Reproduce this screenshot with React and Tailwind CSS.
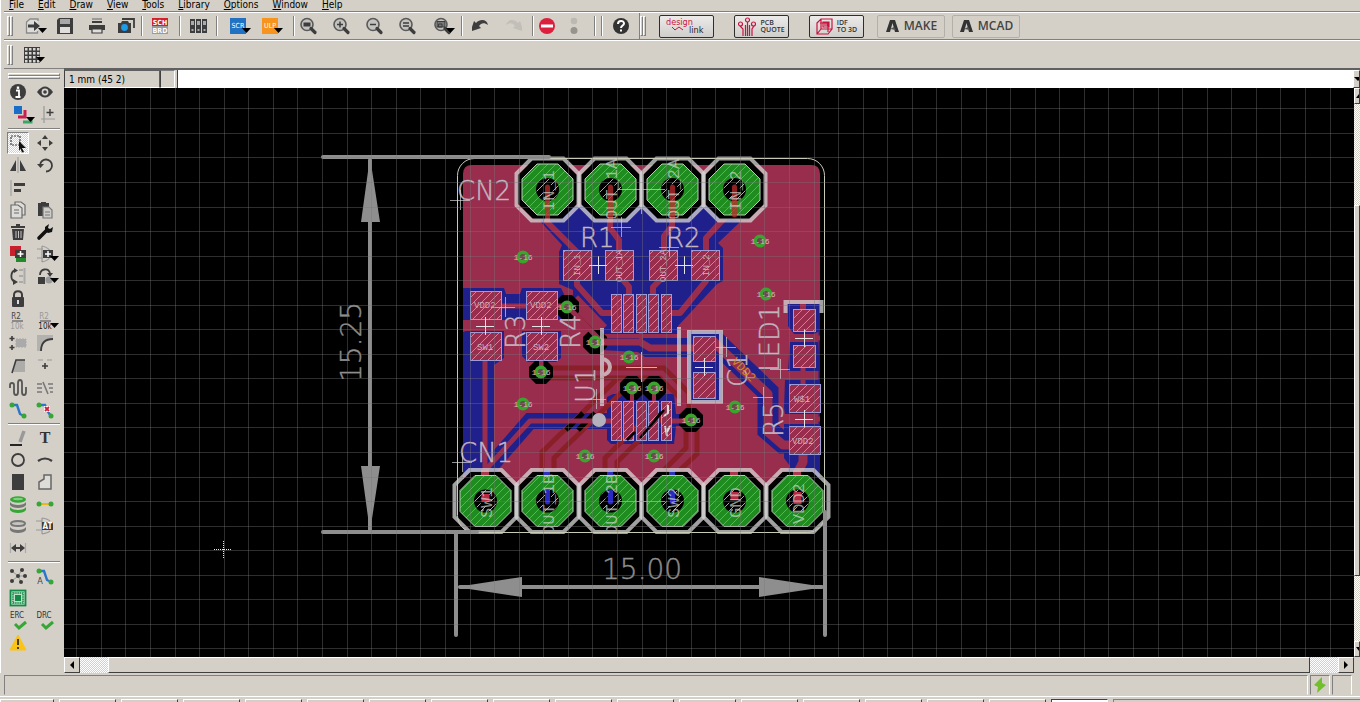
import React from "react";

/* ---------- icons ---------- */

const D = "#3d3d3d";
const G = "#9a9a9a";

const magnifier = (inner) => (
  <>
    <circle cx="9" cy="8.500" r="6" fill="#c4c2be" stroke="#5a5a5a" strokeWidth="1.600" />
    <path d="M13 12.500l4 4" stroke={D} strokeWidth="3.200" strokeLinecap="round" />
    {inner}
  </>
);

const ICONS = {
  file: (
    <>
      <path d="M14 5V3H6L2.500 6v11h11v-2" fill="#dedcd8" stroke="#8a8a8a" strokeWidth="1.300" />
      <path d="M4 8.500h6V5l6 5-6 5v-3.500H4z" fill={D} />
    </>
  ),
  save: (
    <>
      <path d="M2 4l2-2h14v16H2z" fill={D} />
      <rect x="5" y="3" width="10" height="5" fill="#a8a8a8" />
      <rect x="5" y="11" width="10" height="6" fill="#e0deda" />
    </>
  ),
  print: (
    <>
      <rect x="5" y="2" width="10" height="2" fill={G} />
      <rect x="5" y="5" width="10" height="2" fill={D} />
      <path d="M2 9h16v5H2z" fill={D} />
      <path d="M5 13h10v4H5z" fill="#e0deda" stroke={D} strokeWidth="1.200" />
    </>
  ),
  camera: (
    <>
      <path d="M6 3h12v9" fill="none" stroke={D} strokeWidth="1.800" />
      <path d="M2 7h3l1-2h6l1 2h2v10H2z" fill={D} />
      <circle cx="8.500" cy="11.500" r="3.400" fill="#1c9be8" />
    </>
  ),
  lib: (
    <>
      {[2, 8, 14].map((x) => (
        <g key={x}>
          <rect x={x} y="3" width="5" height="14" fill={D} />
          <rect x={x + 1} y="5" width="3" height="4" fill="#aaa" />
          <rect x={x + 1.5} y="13" width="2" height="2" fill="#aaa" />
        </g>
      ))}
    </>
  ),
  zfit: magnifier(<rect x="5.500" y="6.500" width="7" height="4" fill={D} />),
  zin: magnifier(<path d="M6 8.500h6M9 5.500v6" stroke={D} strokeWidth="1.500" />),
  zout: magnifier(<path d="M6 8.500h6" stroke={D} strokeWidth="1.500" />),
  zredraw: magnifier(<path d="M6 7h6M6 10h6" stroke={D} strokeWidth="1.400" />),
  zsel: magnifier(<path d="M5 5.500h8v5.500H5z M6.500 8h3.500v3H6.500z" fill="#777" stroke={D} />),
  undo: <path d="M2 11l2-6 2 2c5-5 11-3 12 2-4-3-7-2-9 1l2 2-9 3z" fill={D} />,
  redo: <path d="M18 11l-2-6-2 2C9 2 3 4 2 9c4-3 7-2 9 1l-2 2 9 3z" fill="#c2bfb8" />,
  stop: (
    <>
      <circle cx="10" cy="10" r="8" fill="#dc1f3c" />
      <rect x="4" y="8.500" width="12" height="3" fill="#fff" />
    </>
  ),
  dots: (
    <>
      <circle cx="10" cy="5" r="3.300" fill="#bcb9b3" />
      <circle cx="10" cy="14.500" r="3.500" fill="#96948f" />
    </>
  ),
  help: (
    <>
      <circle cx="10" cy="10" r="8" fill="#333" />
      <path d="M7 8c0-4 6-4 6-.5 0 2-3 2-3 4.500" fill="none" stroke="#fff" strokeWidth="2" />
      <rect x="9" y="13.500" width="2" height="2" fill="#fff" />
    </>
  ),
  grid: (
    <>
      <rect x="2" y="2" width="16" height="16" fill={D} />
      {[3, 7, 11, 15].map((x) =>
        [3, 7, 11, 15].map((y) => <rect key={x + "-" + y} x={x} y={y} width="2.500" height="2.500" fill="#d8d6d2" />)
      )}
    </>
  ),
  info: (
    <>
      <circle cx="10" cy="10" r="8" fill={D} />
      <path d="M8 8.500h3V15M7.500 15h5" stroke="#fff" strokeWidth="1.800" fill="none" />
      <rect x="8.800" y="4.500" width="2.400" height="2.400" fill="#fff" />
    </>
  ),
  eye: (
    <>
      <path d="M2 10q8-11 16 0q-8 11-16 0z" fill={D} />
      <circle cx="10" cy="10" r="3.400" fill="#d8d6d2" />
      <circle cx="10" cy="10" r="1.800" fill={D} />
    </>
  ),
  layers: (
    <>
      <path d="M11 17h8v-4" fill="none" stroke="#3aa566" strokeWidth="3" />
      <path d="M6 12h7V5" fill="none" stroke="#c81e52" strokeWidth="3" />
      <rect x="2" y="1" width="8" height="8" fill="#1b6ec8" />
    </>
  ),
  mark: (
    <>
      <path d="M9 1v17M6 14h14" stroke="#999" strokeWidth="1.200" />
      <path d="M15 4v7M11.500 7.500h7" stroke={D} strokeWidth="1.400" />
    </>
  ),
  select: (
    <>
      <rect x="3" y="3" width="9" height="9" fill="none" stroke={D} strokeWidth="1.200" strokeDasharray="2 1" />
      <path d="M11 8l7 7h-4l2 4-2 .5-1.500-4L11 18z" fill="#111" />
    </>
  ),
  move: <path d="M10 2l3 4H7zM10 18l3-4H7zM2 10l4-3v6zM18 10l-4-3v6z" fill={D} />,
  mirror: (
    <>
      <path d="M10 2v16" stroke="#aaa" strokeWidth="1.500" />
      <path d="M8 5v11H2zM12 5v11h6z" fill={D} />
    </>
  ),
  rotate: (
    <>
      <path d="M5 10a6 6 0 1 1 6 6.500" fill="none" stroke={D} strokeWidth="1.800" />
      <path d="M2 9h7l-3.500 4z" fill={D} />
    </>
  ),
  align: (
    <>
      <path d="M3 2v16" stroke="#aaa" strokeWidth="1.500" />
      <rect x="6" y="5" width="11" height="3" fill={D} />
      <rect x="6" y="11" width="7" height="3" fill={D} />
    </>
  ),
  copy: (
    <g fill="#dedcd8" stroke="#6a6a6a" strokeWidth="1.200">
      <path d="M7 2h6l4 3v10H7z" />
      <path d="M3 5h7l4 3v10H3z" />
      <path d="M6 10h5M6 13h5" />
    </g>
  ),
  paste: (
    <>
      <path d="M3 3h3V2h5v1h3v13H3z" fill={D} />
      <path d="M8 7h6l3 3v8H8z" fill="#cfcdc9" stroke="#777" strokeWidth="1.200" />
      <path d="M10 12h5M10 15h5" stroke="#777" />
    </>
  ),
  trash: (
    <>
      <path d="M3 4h14v2H3zM8 2h4v2H8zM4 7h12l-1 11H5z" fill={D} />
      <path d="M8 9v7M10.500 9v7M13 9v7" stroke="#c8c6c2" />
    </>
  ),
  wrench: (
    <>
      <path d="M4 16l8-8" stroke="#111" strokeWidth="3.600" strokeLinecap="round" />
      <path d="M10 9V5l4-3-1 4 2 1 3-2-1 5-4 1z" fill="#111" />
    </>
  ),
  add: (
    <>
      <rect x="2" y="2" width="11" height="10" fill="#c9202c" />
      <rect x="8" y="9" width="10" height="9" fill="#238a2c" />
      <rect x="7" y="6" width="11" height="8" fill={D} />
      <path d="M9.500 10h6M12.500 7v6" stroke="#fff" strokeWidth="1.500" />
    </>
  ),
  addgate: (
    <>
      <path d="M1 5h6M1 14h6M6 2v16M6 2q8 2 9 7M6 18q8-2 9-7" fill="none" stroke={G} strokeWidth="1.200" />
      <rect x="7" y="6" width="10" height="8" fill={D} />
      <path d="M9 10h6M12 7v6" stroke="#fff" strokeWidth="1.500" />
    </>
  ),
  pinswap: (
    <>
      <path d="M8 4C2 5 2 14 7 16" fill="none" stroke={D} strokeWidth="1.800" />
      <path d="M6 2l4 2.500L6 7zM5 13l5 3-5 3z" fill={D} />
      <path d="M11 4h4M11 10h4M11 16h4M16.500 2v16" stroke="#aaa" strokeWidth="2" />
    </>
  ),
  replace: (
    <>
      <path d="M4 9c0-6 8-8 10-2" fill="none" stroke={D} strokeWidth="1.800" />
      <path d="M11 7h6l-3 4z" fill={D} />
      <rect x="2" y="11" width="7" height="7" fill={D} />
      <circle cx="13" cy="14" r="3.500" fill="#999" />
    </>
  ),
  lock: (
    <>
      <path d="M6 9V6c0-5 8-5 8 0v3" fill="none" stroke={D} strokeWidth="2" />
      <rect x="4" y="8" width="12" height="10" rx="1" fill={D} />
      <path d="M10 11v4" stroke="#ddd" strokeWidth="2" />
    </>
  ),
  smash: (
    <>
      <path d="M4 3v5M1.500 5.500h5M4 12v5M1.500 14.500h5" stroke={D} strokeWidth="1.600" />
      <path d="M8 6h10v8H8z" fill="#aaa" stroke="#aaa" strokeDasharray="2 1" />
    </>
  ),
  miter: (
    <>
      <rect x="2" y="2" width="16" height="16" fill="#b4b2ae" />
      <path d="M6 18Q7 6 18 6v12z" fill="#d4d0c8" />
      <path d="M6 18Q6 6 18 6" fill="none" stroke={D} strokeWidth="1.800" />
    </>
  ),
  split: (
    <>
      <path d="M5 17L8 5h9v12z" fill="#aeaca8" />
      <path d="M4 18L8 5h9" fill="none" stroke={D} strokeWidth="1.600" />
    </>
  ),
  optimize: (
    <>
      <path d="M3 5h5M12 5h5" stroke={G} strokeWidth="1.200" />
      <path d="M10 8v6M7 11h6" stroke={D} strokeWidth="1.600" />
    </>
  ),
  meander: (
    <path d="M2 10V7q0-2 2-2t2 2v7q0 3 2 3t2-3V5q0-3 2-3t2 3v9q0 3 2 3t2-3V9" fill="none" stroke="#555" strokeWidth="1.800" />
  ),
  ripup: (
    <path d="M2 6h5M2 10h5M2 14h5M13 6h5M14 10h4M15 14h3M8 4l5 12" fill="none" stroke="#777" strokeWidth="1.600" />
  ),
  route: (
    <>
      <path d="M4 5h5l3 9 4 2" fill="none" stroke="#2a77c9" strokeWidth="2.400" />
      <circle cx="4" cy="5" r="2.500" fill="#37a637" />
      <circle cx="16" cy="16" r="2.500" fill="#37a637" />
    </>
  ),
  unroute: (
    <>
      <path d="M4 5h6l3 7 3 4" fill="none" stroke="#2a77c9" strokeWidth="2.400" />
      <circle cx="4" cy="5" r="2.500" fill="#37a637" />
      <circle cx="16" cy="16" r="2.500" fill="#37a637" />
      <path d="M9 6h6v6H9z" fill="#fff" />
      <path d="M10 7l4 4M14 7l-4 4" stroke="#d01f3c" strokeWidth="1.800" />
    </>
  ),
  wire: (
    <>
      <path d="M2 17h12" stroke="#111" strokeWidth="1.800" />
      <path d="M12 14l4-11" stroke="#999" strokeWidth="3.500" />
    </>
  ),
  circle: <circle cx="10" cy="10" r="6" fill="none" stroke={D} strokeWidth="1.800" />,
  arc: <path d="M3 11q7-5 14 0" fill="none" stroke={D} strokeWidth="2.200" />,
  rect: <rect x="4" y="2" width="12" height="16" fill={D} />,
  polygon: <path d="M4 17V10l5-3V3h7v14z" fill="#dedcd8" stroke="#666" strokeWidth="1.500" />,
  via: (
    <>
      <path d="M2 13c2 4 14 4 16 0v3c-2 4-14 4-16 0z" fill="#37a637" />
      <path d="M2 8c2 4 14 4 16 0v3c-2 4-14 4-16 0z" fill="#777" />
      <ellipse cx="10" cy="5.500" rx="8" ry="3.300" fill="#37a637" />
      <ellipse cx="10" cy="5" rx="5" ry="1.200" fill="#7fd07f" />
    </>
  ),
  signal: (
    <>
      <path d="M4 10h12" stroke="#e8b71c" strokeWidth="2" />
      <circle cx="4" cy="10" r="2.500" fill="#37a637" />
      <circle cx="16" cy="10" r="2.500" fill="#37a637" />
    </>
  ),
  hole: (
    <>
      <path d="M2 11c2 4 14 4 16 0v3c-2 4-14 4-16 0z" fill="#777" />
      <ellipse cx="10" cy="7.500" rx="7" ry="2.600" fill="#c6c4c0" stroke="#777" strokeWidth="2" />
    </>
  ),
  dimension: (
    <>
      <path d="M2.500 5v10M17.500 5v10" stroke="#aaa" strokeWidth="1.200" />
      <path d="M6 10h8" stroke={D} strokeWidth="2" />
      <path d="M3 10l5-4v8zM17 10l-5-4v8z" fill={D} />
    </>
  ),
  ratsnest: (
    <>
      <path d="M4 5l6 5 4-6M4 15l6-5 7 0M10 10l3 6" stroke={G} fill="none" />
      {[[4, 5], [10, 10], [14, 4], [4, 15], [17, 10], [13, 16]].map(([x, y]) => (
        <circle key={x + "-" + y} cx={x} cy={y} r="2" fill={D} />
      ))}
    </>
  ),
  board: (
    <>
      <rect x="2.500" y="2.500" width="15" height="15" fill="#bfe0c8" stroke="#128a45" strokeWidth="1.800" />
      <rect x="5" y="5" width="10" height="10" fill="none" stroke="#128a45" strokeWidth="1.500" strokeDasharray="1.500 .7" />
      <rect x="7" y="7" width="6" height="6" fill="#128a45" />
    </>
  ),
  warn: (
    <>
      <path d="M10 2l8 15H2z" fill="#fbc312" stroke="#fbc312" strokeLinejoin="round" />
      <path d="M10 6v6M10 14v2" stroke="#333" strokeWidth="1.800" />
    </>
  ),
};

const vt = (x, y, size, fill, t, weight) => (
  <text x={x} y={y} fontSize={size} fill={fill} fontWeight={weight} fontFamily="DejaVu Sans Condensed, DejaVu Sans, sans-serif" textAnchor="middle">
    {t}
  </text>
);

ICONS.sch = (
  <>
    <rect x="2" y="2" width="16" height="8" fill="#d42029" />
    <rect x="2" y="10" width="16" height="8" fill="#9a9a9a" />
    {vt(10, 9, 7, "#fff", "SCH", 700)}
    {vt(10, 17, 7, "#fff", "BRD", 700)}
  </>
);
ICONS.scr = (
  <>
    <rect x="2" y="2" width="16" height="16" fill="#2272c3" />
    {vt(10, 12, 7, "#fff", "SCR", 400)}
  </>
);
ICONS.ulp = (
  <>
    <rect x="2" y="2" width="16" height="16" fill="#f7941d" />
    {vt(10, 12, 7, "#fff", "ULP", 400)}
  </>
);
ICONS.name = (
  <>
    {vt(8, 8, 8, "#444", "R2", 400)}
    <path d="M4 10h11" stroke="#444" />
    {vt(9, 18, 8, "#999", "10k", 400)}
  </>
);
ICONS.value = (
  <>
    {vt(8, 8, 8, "#999", "R2", 400)}
    <path d="M4 10h11" stroke="#444" />
    {vt(9, 18, 8, "#222", "10k", 400)}
  </>
);
ICONS.text = (
  <text x="10" y="15" fontSize="16" fontWeight="700" fill="#333" textAnchor="middle" fontFamily="Liberation Serif, serif">
    T
  </text>
);
ICONS.attr = (
  <>
    <path d="M1 5h6M1 14h6M7 2v16M7 2q6 1 8 3M7 18q6-1 8-3" fill="none" stroke={G} strokeWidth="1.200" />
    <rect x="7" y="6" width="11" height="8" fill={D} />
    {vt(12.5, 13, 8, "#fff", "AT", 700)}
  </>
);
ICONS.auto = (
  <>
    {ICONS.route}
    {vt(5, 18, 9, "#444", "A", 400)}
  </>
);
ICONS.erc = (
  <>
    {vt(9, 7, 8, "#333", "ERC", 400)}
    <path d="M7 13l4 4 7-6" fill="none" stroke="#37a637" strokeWidth="3" />
  </>
);
ICONS.drc = (
  <>
    {vt(9, 7, 8, "#333", "DRC", 400)}
    <path d="M7 13l4 4 7-6" fill="none" stroke="#37a637" strokeWidth="3" />
  </>
);

function Icon({ name, drop }) {
  return (
    <svg width={drop ? 24 : 20} height="20" viewBox={drop ? "0 0 24 20" : "0 0 20 20"} className="block shrink-0" aria-hidden="true">
      {ICONS[name]}
      {drop && <path d="M14 12h9l-4.500 5z" fill="#000" />}
    </svg>
  );
}

/* ---------- toolbars ---------- */

const MENUS = ["File", "Edit", "Draw", "View", "Tools", "Library", "Options", "Window", "Help"];

const TOOLS = [
  ["file", "w-9", "Open", true],
  ["save", "w-[22px]", "Save"],
  ["print", "w-[42px]", "Print"],
  ["camera", "w-4", "Export image"],
  ["|", "w-4"],
  ["sch", "w-5", "Schematic"],
  ["|", "w-5"],
  ["lib", "w-4", "Library"],
  ["|", "w-[22px]"],
  ["scr", "w-6", "Run script", true],
  ["ulp", "w-[39px]", "Run ULP", true],
  ["|", "w-[5px]"],
  ["zfit", "w-6", "Zoom to fit"],
  ["zin", "w-[42px]", "Zoom in"],
  ["zout", "w-6", "Zoom out"],
  ["zredraw", "w-[42px]", "Redraw"],
  ["zsel", "w-[32px]", "Zoom select", true],
  ["|", "w-1"],
  ["undo", "w-8", "Undo"],
  ["redo", "w-[35px]", "Redo"],
  ["|", "w-1"],
  ["stop", "w-[23px]", "Stop"],
  ["dots", "w-8", "Go"],
  ["|", "w-[10px]"],
  ["|", "w-1"],
  ["help", "w-[33px]", "Help"],
];

const PALETTE = [
  ["info", "eye", "layers+", "mark"],
  ["select*", "move", "mirror", "rotate", "align", "", "copy", "paste", "trash", "wrench", "add", "addgate+", "pinswap", "replace+", "lock", "", "name", "value+", "smash", "miter", "split", "optimize", "meander", "ripup", "route", "unroute"],
  ["wire", "text", "circle", "arc", "rect", "polygon", "via", "signal", "hole", "attr", "dimension", ""],
  ["ratsnest", "auto", "board", "", "erc", "drc", "warn", ""],
];
const PALETTE_HEIGHT = ["h-[45px]", "h-[289px]", "h-[132px]", "h-[89px]"];

const RAISED = "bg-[#d4d0c8] border border-t-white border-l-white border-r-[#404040] border-b-[#404040]";
const CHECKER = "bg-[conic-gradient(#fff_25%,#d4d0c8_0_50%,#fff_0_75%,#d4d0c8_0)] bg-size-[2px_2px]";

function Divider() {
  return <span className="h-5 w-[2px] border-l border-r border-l-[#808080] border-r-white" />;
}

function Grip() {
  return (
    <span className="flex shrink-0">
      <span className="h-5 w-[3px] border border-t-white border-l-white border-r-[#808080] border-b-[#808080]" />
      <span className="h-5 w-[3px] border border-t-white border-l-white border-r-[#808080] border-b-[#808080]" />
    </span>
  );
}

function Triangle({ d }) {
  return (
    <svg width="8" height="8" viewBox="0 0 8 8" className="shrink-0" aria-hidden="true">
      <path d={d} fill="#000" />
    </svg>
  );
}

function Toolbar() {
  const link = "flex h-[23px] w-[55px] items-center justify-center gap-1 rounded-xs border border-[#2e2e2e] bg-linear-to-b from-[#ecebea] to-[#cfcecb]";
  const desk = "flex h-[23px] w-[68px] items-center justify-center gap-1 rounded-xs border border-[#b3b0aa] text-xs font-semibold text-[#444]";
  const autodesk = (
    <svg width="15" height="14" viewBox="0 0 15 14" aria-hidden="true">
      <path d="M1 13L5 1h5l4 12h-4L7.500 4 5 13z" fill="#333" />
      <path d="M5 10l4-2 2 3z" fill="#555" />
    </svg>
  );
  return (
    <div className="flex h-7 shrink-0 items-center border-t border-b border-t-white border-b-[#808080] pl-[3px]">
      <Grip />
      <div className="ml-[5px] flex items-center">
        {TOOLS.map(([name, w, label, drop], i) =>
          name === "|" ? (
            <span key={i} className={"flex shrink-0 justify-center " + w}>
              <Divider />
            </span>
          ) : (
            <button key={i} aria-label={label} className={"flex shrink-0 justify-center " + w}>
              <Icon name={name} drop={drop} />
            </button>
          )
        )}
      </div>
      <span className="ml-[2px] h-full border-l border-l-[#808080]" />
      <Grip />
      <div className="ml-[13px] flex shrink-0 gap-5 font-['Open_Sans',sans-serif]">
        <button className={link} aria-label="design link">
          <svg width="46" height="20" viewBox="0 0 46 20" fontFamily="DejaVu Sans Condensed, DejaVu Sans, sans-serif" fontSize="9">
            <text x="2" y="9" fill="#c9143f">design</text>
            <text x="25" y="17" fill="#222">link</text>
            <path d="M8 11l3 3 4-3 4 3" fill="none" stroke="#c9143f" />
          </svg>
        </button>
        <button className={link}>
          <svg width="18" height="20" viewBox="0 0 18 20" fill="none" stroke="#c9143f" strokeWidth="1.200" aria-hidden="true">
            <path d="M5 20v-7l-3-3M7.500 20V9M9.500 20V6M11.500 20V9M14 20v-7l2-3" />
            <circle cx="2.500" cy="8" r="2" />
            <circle cx="9.500" cy="4" r="2" />
            <circle cx="15.500" cy="8" r="2" />
          </svg>
          <span className="text-left text-[7px] leading-[7px] font-semibold text-[#333]">PCB<br />QUOTE</span>
        </button>
        <button className={link}>
          <svg width="17" height="17" viewBox="0 0 17 17" fill="none" stroke="#c9143f" strokeWidth="1.200" aria-hidden="true">
            <path d="M1 5l4-4h11v10l-4 5H1zM5 1v10h11M1 16l4-5M4 5h8v9M7 4h6v5H7zM9 5v3M11 5v3" />
          </svg>
          <span className="text-left text-[7px] leading-[7px] font-semibold text-[#333]">IDF<br />TO 3D</span>
        </button>
      </div>
      <div className="ml-[13px] flex shrink-0 gap-[7px] font-['Open_Sans',sans-serif]">
        <button className={desk}>{autodesk}MAKE</button>
        <button className={desk}>{autodesk}MCAD</button>
      </div>
    </div>
  );
}

function Palette() {
  return (
    <aside className="flex w-[60px] shrink-0 flex-col gap-1 border-t border-t-[#808080] pt-1" aria-label="Drawing tools">
      <div className="mr-1 -mb-[2px] ml-1 flex flex-col">
        <span className="h-[3px] border border-t-white border-l-white border-r-[#808080] border-b-[#808080]" />
        <span className="h-[3px] border border-t-white border-l-white border-r-[#808080] border-b-[#808080]" />
      </div>
      {PALETTE.map((group, g) => (
        <React.Fragment key={g}>
          {g > 0 && <span className="mx-1 -my-[2px] h-[2px] shrink-0 border-t border-b border-t-[#808080] border-b-white" />}
          <div className={"grid w-[55px] shrink-0 auto-rows-fr grid-cols-2 " + PALETTE_HEIGHT[g]}>
            {group.map((item, i) => {
              if (!item) return <span key={i} />;
              const name = item.replace(/[+*]/, "");
              const chosen = item.endsWith("*");
              return (
                <button
                  key={i}
                  aria-label={name}
                  className={
                    "flex items-center overflow-visible " +
                    (name === "layers" ? "justify-start pl-2 " : item.endsWith("+") ? "justify-start pl-1 " : "justify-center ") +
                    (chosen ? "mx-[3px] border border-t-[#808080] border-l-[#808080] border-r-white border-b-white " + CHECKER : "")
                  }
                >
                  <Icon name={name} drop={item.endsWith("+")} />
                </button>
              );
            })}
          </div>
        </React.Fragment>
      ))}
    </aside>
  );
}

/* ---------- board ---------- */

const RED = "#982d4e";
const BLUE = "#20208c";
const SILK = "rgba(215,215,215,0.75)";
const GRAY = "#8e8e8e";

const octagon = (cx, cy, r, f) =>
  `${cx - f},${cy - r} ${cx + f},${cy - r} ${cx + r},${cy - f} ${cx + r},${cy + f} ${cx + f},${cy + r} ${cx - f},${cy + r} ${cx - r},${cy + f} ${cx - r},${cy - f}`;

const TOP_PINS = [
  [547.5, "IN_1", 211],
  [610.5, "OUT_1A", 220],
  [672.5, "OUT_2A", 220],
  [734.5, "IN_2", 211],
];
const LOW_PINS = [
  [485.5, "SW1", 518],
  [547.5, "OUT_1B", 535],
  [610.5, "OUT_2B", 535],
  [672.5, "SW2", 518],
  [734.5, "GND", 518],
  [797.5, "VDD2", 524],
];

const PADS = [
  [563, 250, 28, 30], [605, 250, 28, 30], [649, 250, 28, 30], [691, 250, 28, 30],
  [470, 291, 31, 28], [526, 291, 31, 28], [470, 332, 31, 28], [526, 332, 31, 28],
  [693, 336, 22, 25], [693, 372, 22, 26],
  [793, 309, 22, 22], [793, 345, 22, 22],
  [789, 384, 31, 28], [789, 426, 31, 28],
  ...[611, 623, 636, 648, 661].flatMap((x) => [[x, 294, 10, 38], [x, 401, 10, 39]]),
];

const VIAS = [[523, 257], [760, 241], [766, 294], [567, 307], [595, 342], [629, 357], [541, 372], [632, 388], [654, 388], [523, 404], [735, 407], [691, 420], [585, 456], [654, 456]];
const KEEPOUTS = [[567, 307], [595, 342], [541, 372], [632, 388], [654, 388], [691, 420]];

const BLUE_AREAS = [
  "540,221 578,205 705,205 740,222 718,243 723,248 723,281 717,284 678,326 678,334 596,334 573,297 573,290 559,284 559,252 562,245",
  "463,288 504,288 506,294 520,294 522,288 561,288 564,294 564,318 560,320 463,320",
  "463,332 466,331 504,331 504,358 494,365 494,476 463,476",
  "522,331 561,331 561,358 556,362 528,362 522,356",
  "607,397 613,394 674,394 676,414 690,414 690,426 676,426 674,444 611,444 607,440",
  "601,338 700,338 700,357 645,357 638,352 601,350",
  "688,331 722,331 722,402 688,402",
  "788,304 820,304 820,331 814,334 794,334 788,326",
  "790,342 818,342 820,371 788,371",
  "785,380 820,380 820,414 785,414 784,408",
  "784,424 820,424 820,482 782,482 790,466 784,458",
];

const BLUE_TRACES = [
  ["480,478 530,421 610,421", 16],
  ["712,338 720,346 768,392 768,430 783,443 800,443", 21],
  ["541,350 541,370", 4],
  ["820,300 820,480", 3],
];

const RED_TRACES = [
  ["547,205 547,222 577,252 577,285 602,313 614,313", 6],
  ["610,205 610,228 619,240 619,275 629,287 629,300", 6],
  ["672,205 672,226 664,236 664,276 653,287 653,300", 6],
  ["734,208 706,238 706,281 680,313 666,313", 6],
  ["485,345 485,500", 5],
  ["478,478 530,421 616,421", 5],
  ["463,326 574,326", 8],
  ["485,306 567,306 600,340", 5],
  ["541,345 541,372", 4],
  ["597,342 640,342 650,348 704,348", 7],
  ["641,330 641,340", 4],
  ["712,340 720,348 768,394 768,432 783,445 800,445", 9],
  ["803,300 803,310", 6],
  ["785,338 820,338", 5],
  ["803,360 803,390", 5],
  ["780,419 820,419", 5],
  ["803,450 803,462 797,474 797,498", 9],
  ["666,421 691,421", 5],
  ["632,388 632,405", 4],
  ["654,388 654,405", 4],
  ["734,470 734,500", 9],
];

const DARK_TRACES = [
  "541,368 664,368 689,393 689,412",
  "541,378 660,378 680,398",
  "573,312 596,335",
  "542,470 542,452 618,378",
  "554,470 554,458 628,386",
  "605,470 605,458 658,406",
  "617,470 617,462 668,412",
  "686,430 686,448 664,470",
  "697,430 697,454 680,470",
];

const CENTERS = [[598, 265], [684, 265], [485, 326], [541, 326], [704, 367], [804, 338], [804, 419]];
const ORIGINS = [[460, 200], [462, 462], [621, 227], [669, 247], [505, 307], [726, 347], [780, 369], [763, 397], [596, 399]];

const LABELS = [
  ["CN2", 457, 200, 0], ["CN1", 459, 462, 0], ["R1", 580, 247, 0], ["R2", 666, 247, 0],
  ["R3", 525, 349, 1], ["R4", 580, 349, 1], ["U1", 595, 403, 1], ["C1", 747, 387, 1], ["LED1", 779, 372, 1], ["R5", 783, 437, 1],
];
const NOTES = [
  ["VDD2", 474, 308, 0], ["VDD2", 530, 308, 0], ["SW1", 477, 350, 0], ["SW2", 533, 350, 0], ["W$1", 794, 402, 0], ["VDD2", 792, 444, 0],
  ["IN_1", 580, 276, 1], ["OUT_1A", 622, 282, 1], ["OUT_2A", 666, 282, 1], ["IN_2", 709, 276, 1],
];

const cross = ([x, y], s) => `M${x - s} ${y}.5h${2 * s}M${x}.5 ${y - s}v${2 * s}`;

function Pin({ x, y }) {
  return (
    <g>
      <polygon points={octagon(x, y, 25.5, 10.5)} fill="#1f8c1f" />
      <polygon points={octagon(x, y, 25.5, 10.5)} fill="url(#hatch-green)" stroke="#b9cdb9" />
      <circle cx={x} cy={y} r="11.500" fill="#000" />
      <circle cx={x} cy={y} r="11" fill="url(#hatch-white)" />
      <circle cx={x} cy={y} r="5.500" fill="#000" />
    </g>
  );
}

function Board() {
  const cols = Array.from({ length: 60 }, (_, i) => Math.round(76.3 + i * 24.575));
  const rows = Array.from({ length: 30 }, (_, i) => Math.round(108.3 + i * 24.55));
  return (
    <svg width="100%" height="100%" className="block" role="img" aria-label="Board layout" fontFamily="Liberation Mono, monospace">
      <defs>
        <pattern id="hatch-red" width="8" height="8" patternUnits="userSpaceOnUse">
          <path d="M-1 9L9 -1M-1 1L1 -1M7 9L9 7" stroke="#c08a9c" />
        </pattern>
        <pattern id="hatch-green" width="8" height="8" patternUnits="userSpaceOnUse">
          <path d="M-1 9L9 -1M-1 1L1 -1M7 9L9 7" stroke="#5db25d" />
        </pattern>
        <pattern id="hatch-white" width="8" height="8" patternUnits="userSpaceOnUse">
          <path d="M-1 9L9 -1M-1 1L1 -1M7 9L9 7" stroke="#aaa" />
        </pattern>
        <clipPath id="pour">
          <path d="M463 500V174q0-9 9-9h339q9 0 9 9v326z" />
        </clipPath>
        <clipPath id="pins">
          {TOP_PINS.map(([x]) => <rect key={x} x={x - 16} y="158" width="32" height="60" />)}
          {LOW_PINS.map(([x]) => <rect key={"l" + x} x={x - 16} y="470" width="32" height="60" />)}
        </clipPath>
      </defs>
      <g transform="translate(-64 -88)">
        <g clipPath="url(#pour)">
          <rect x="463" y="165" width="357" height="335" fill={RED} />
          {BLUE_AREAS.map((p) => <polygon key={p} points={p} fill={BLUE} />)}
          {BLUE_TRACES.map(([p, w]) => <polyline key={p} points={p} fill="none" stroke={BLUE} strokeWidth={w} />)}
          <polyline points="573,300 602,330" stroke={RED} strokeWidth="14" />
          {DARK_TRACES.map((p) => <polyline key={p} points={p} fill="none" stroke="#8a1f28" strokeWidth="5" />)}
          <path d="M566 430l17-17M578 430l17-17" stroke="#000" strokeWidth="5" />
          {KEEPOUTS.map(([x, y]) => <polygon key={x + "," + y} points={octagon(x, y, 12, 5)} fill="#000" />)}
          {RED_TRACES.map(([p, w]) => <polyline key={p} points={p} fill="none" stroke={RED} strokeWidth={w} strokeLinejoin="round" />)}
        </g>

        {TOP_PINS.map(([x]) => <polygon key={x} points={octagon(x, 189.5, 30, 14)} fill="#000" />)}
        {LOW_PINS.map(([x]) => <polygon key={x} points={octagon(x, 501, 30, 14)} fill="#000" />)}
        <path d="M547 470v12M610 470v12M672 470v12" stroke="#3030b8" strokeWidth="6" />
        <path d="M485 470v12M734 470v12M797 470v12" stroke="#a83a50" strokeWidth="8" />

        {PADS.map(([x, y, w, h]) => (
          <g key={x + "," + y}>
            <rect x={x} y={y} width={w} height={h} fill={RED} />
            <rect x={x + 0.5} y={y + 0.5} width={w} height={h} fill="url(#hatch-red)" stroke="#9c9cd8" />
          </g>
        ))}
        <path d="M640 438l24-28M627 440l8-8M655 420l6-8" stroke="#000" strokeWidth="2.500" />
        <path d="M668 405v8l-4 3M665 426l2 10M670 426l-3 6" stroke="#ddd" strokeWidth="2" fill="none" />

        {TOP_PINS.map(([x]) => <Pin key={x} x={x} y={189.5} />)}
        {LOW_PINS.map(([x]) => <Pin key={x} x={x} y={501} />)}
        <path d="M547.500 187v33M610.500 187v33M672.500 187v33M734.500 187v28" stroke="rgba(190,45,45,0.750)" strokeWidth="5" strokeLinecap="round" />
        <path d="M547.500 492v10M610.500 492v10M672.500 492v10" stroke="#2a2ac0" strokeWidth="5" strokeLinecap="round" />
        <path d="M485.500 494v8M734.500 492v8M797.500 492v12" stroke="#b82a44" strokeWidth="8" />
        {TOP_PINS.map(([x]) => <polygon key={x} points={octagon(x, 189.5, 31, 16)} fill="none" stroke={SILK} strokeWidth="4" />)}
        {LOW_PINS.map(([x]) => <polygon key={x} points={octagon(x, 501, 31, 16)} fill="none" stroke={SILK} strokeWidth="4" />)}

        <g clipPath="url(#pins)" fontSize="17" fill="rgba(205,215,205,0.700)">
          {TOP_PINS.map(([x, t, y]) => <text key={t} transform={`translate(${x + 6} ${y}) rotate(-90)`}>{t}</text>)}
          {LOW_PINS.map(([x, t, y]) => <text key={t} transform={`translate(${x + 6} ${y}) rotate(-90)`}>{t}</text>)}
        </g>

        <rect x="457.500" y="158.500" width="367" height="374" rx="17" fill="none" stroke="#c9c9b8" />

        <g fill="none" stroke={SILK} strokeWidth="4">
          <path d="M602 328v78M679 327v79M602 359a8 8 0 0 1 0 16" />
          <rect x="689" y="332" width="32" height="70" />
          <path d="M785.500 313v-11h36v11" />
        </g>
        <circle cx="599" cy="420" r="7" fill="#b4b0bc" />

        {VIAS.map(([x, y]) => (
          <g key={x + "," + y}>
            <circle cx={x} cy={y} r="4.800" fill="#6a4a4a" stroke="#3aa52c" strokeWidth="3.400" />
            <text x={x} y={y + 3} textAnchor="middle" fontSize="8" fill="#dcb4ba">1-16</text>
          </g>
        ))}

        <g fill="#c4b4c0" stroke="#c4b4c0" strokeWidth="0.400" fontSize="26" fontWeight="200" fontFamily="DejaVu Sans, sans-serif">
          {LABELS.map(([t, x, y, v]) => (
            <text key={t} transform={`translate(${x} ${y})${v ? " rotate(-90)" : ""}`}>{t}</text>
          ))}
        </g>
        <g fill="#d0b0bc" fontSize="9">
          {NOTES.map(([t, x, y, v]) => (
            <text key={t + x + y} transform={`translate(${x} ${y})${v ? " rotate(-90)" : ""}`}>{t}</text>
          ))}
        </g>
        <text transform="translate(731 362) rotate(45)" fontSize="12" fill="#d08a2c">VDD2</text>

        <path d={CENTERS.map((c) => cross(c, 9)).join("")} stroke="#e4e4e4" fill="none" strokeWidth="1" />
        <path d={ORIGINS.map((c) => cross(c, 10)).join("") + "M617 189.500h48M641.500 179v35M617 501.500h48M641.500 484v35"} stroke="rgba(210,210,210,0.700)" fill="none" />
        <path d="M626 367.500h31M641.500 352v30" stroke="#d8b890" fill="none" />

        <g stroke={GRAY} strokeWidth="4" strokeLinecap="round">
          <path d="M323 157h226M323 532h154M370 160v370M456 534v101M825 512v123M460 587h362" />
        </g>
        <path d="M370 157l-9 65h19zM370 532l-9 -66h19zM456 587l66 -10v20zM825 587l-66 -10v20z" fill={GRAY} />
        <g fill={GRAY} stroke={GRAY} strokeWidth="0.400" fontSize="28" fontWeight="200" fontFamily="DejaVu Sans, sans-serif">
          <text x="602" y="579">15.00</text>
          <text transform="translate(361 382) rotate(-90)">15.25</text>
        </g>

        <path
          d={cols.map((x) => `M${x}.5 88V2000`).join("") + rows.map((y) => `M64 ${y}.5H4000`).join("")}
          stroke="rgba(120,120,120,0.380)"
          fill="none"
        />
        <path d="M214 549.500h18M223.500 541v18" stroke="#e8e8e8" strokeDasharray="1 1" />
      </g>
    </svg>
  );
}

/* ---------- page ---------- */

export default function App() {
  return (
    <div className="flex h-screen flex-col overflow-hidden bg-[#d4d0c8] font-['DejaVu_Sans_Condensed','DejaVu_Sans',sans-serif] text-[10px] text-black">
      <div className="flex min-h-0 flex-1 flex-col border-l border-l-white pl-[3px]">
        <nav className="flex h-3 shrink-0 items-start gap-[14px] border-b border-b-[#808080] pl-[5px]">
          {MENUS.map((m) => (
            <button key={m} className="leading-[10px]">
              <span className="underline">{m[0]}</span>
              {m.slice(1)}
            </button>
          ))}
        </nav>
        <Toolbar />
        <div className="flex h-7 shrink-0 items-center border-t border-t-white pl-[3px]">
          <Grip />
          <button aria-label="Grid" className="ml-[9px]">
            <Icon name="grid" drop />
          </button>
        </div>

        <div className="flex min-h-0 flex-1">
          <Palette />
          <main className="flex min-w-0 flex-1 flex-col">
            <div className="flex h-5 shrink-0 border-t-2 border-t-[#606060]">
              <div className="flex w-24 items-center border border-t-[#606060] border-r-[#606060] border-b-white border-l-[#404040] pl-1">1 mm (45 2)</div>
              <div className="mr-[2px] w-[15px] border border-t-[#808080] border-r-white border-b-white border-l-[#404040]" />
              <input aria-label="Command line" className="min-w-0 flex-1 border-l border-l-[#404040] bg-white px-1 outline-none" />
              <button aria-label="Command history" className={"flex w-[7px] items-center overflow-hidden " + RAISED}>
                <Triangle d="M0 2h8L4 6z" />
              </button>
            </div>
            <div className="flex min-h-0 flex-1">
              <div className="min-h-0 min-w-0 flex-1 overflow-hidden bg-black">
                <Board />
              </div>
              <div className={"flex w-[6px] shrink-0 flex-col overflow-hidden " + CHECKER}>
                <button aria-label="Scroll up" className={"flex h-4 items-center overflow-hidden " + RAISED}>
                  <Triangle d="M1 6h7L4 2z" />
                </button>
                <span className="h-[101px]" />
                <span className={"h-[371px] " + RAISED} />
                <span className="flex-1" />
                <button aria-label="Scroll down" className={"flex h-4 items-center overflow-hidden " + RAISED}>
                  <Triangle d="M1 2h7L4 6z" />
                </button>
              </div>
            </div>
            <div className="flex h-4 shrink-0">
              <div className={"flex flex-1 " + CHECKER}>
                <button aria-label="Scroll left" className={"flex w-4 items-center justify-center " + RAISED}>
                  <Triangle d="M6 0v8L2 4z" />
                </button>
                <span className="w-7" />
                <span className={"flex-1 " + RAISED} />
                <span className="w-7" />
                <button aria-label="Scroll right" className={"flex w-4 items-center justify-center " + RAISED}>
                  <Triangle d="M2 0v8l4-4z" />
                </button>
              </div>
              <span className="w-[6px]" />
            </div>
          </main>
        </div>
      </div>

      <footer className="flex h-6 shrink-0 gap-[2px] border-b border-b-white pt-[2px] pr-2 pb-px pl-1">
        <div className="flex-1 border border-t-[#808080] border-r-white border-b-transparent border-l-[#808080]" />
        <div className="flex w-5 items-center justify-center border border-t-[#808080] border-r-white border-b-transparent border-l-[#808080]">
          <svg width="14" height="16" viewBox="0 0 14 16" aria-hidden="true">
            <path d="M9 0L1 8l4 2-1 6 9-8-4-2z" fill="#72bf2c" />
          </svg>
        </div>
        <div className="w-5 border border-t-[#808080] border-r-white border-b-transparent border-l-[#808080]" />
      </footer>
      <div className="flex h-[5px] shrink-0 gap-[5px] pt-[2px]">
        {Array.from({ length: 18 }, (_, i) => (
          <span
            key={i}
            className={
              "h-[3px] shrink-0 border-t border-r border-l " +
              (i === 0 ? "w-[54px] " : "w-[57px] ") +
              (i === 17 ? "border-t-[#404040] border-l-[#404040] border-r-white bg-white" : "border-t-white border-l-white border-r-[#404040]")
            }
          />
        ))}
        <span className="flex-1 border-t border-l border-t-[#808080] border-l-[#808080]" />
      </div>
    </div>
  );
}
